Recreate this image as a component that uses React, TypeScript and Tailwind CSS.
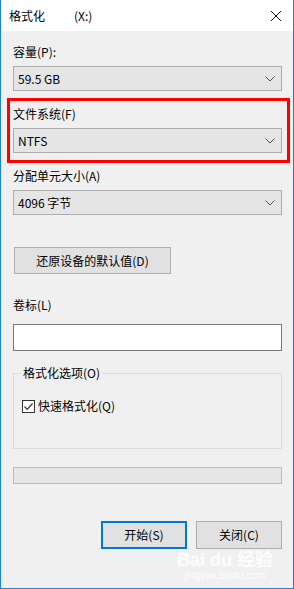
import React from "react";

const font = { fontFamily: '"Noto Sans CJK SC", "Noto Sans", sans-serif' };

function Chevron() {
  return (
    <svg width="10" height="6" viewBox="0 0 10 6" className="shrink-0">
      <path d="M0.5 0.5 L5 5 L9.5 0.5" fill="none" stroke="#555" strokeWidth="1" />
    </svg>
  );
}

function Select({ value }: { value: string }) {
  return (
    <div className="flex h-[25px] w-[269px] items-center justify-between border border-[#adadad] bg-[#e5e5e5] pl-[4px] pr-[6px] text-[12px] text-black">
      <span>{value}</span>
      <Chevron />
    </div>
  );
}

function Label({ text, className = "" }: { text: string; className?: string }) {
  return <div className={`h-[16px] text-[12px] leading-[16px] text-black ${className}`}>{text}</div>;
}

export default function App() {
  return (
    <div style={font} className="flex h-[589px] w-[294px] flex-col border-x border-b border-[#1c83dc] bg-[#f0f0f0]">
      {/* title bar */}
      <div className="flex h-[31px] items-center bg-white pl-[8px] pr-[6px] text-[12px] text-black">
        <span>格式化</span>
        <span className="ml-[29px]">(X:)</span>
        <svg width="12" height="12" viewBox="0 0 12 12" className="ml-auto mr-[5px]">
          <path d="M1 1 L11 11 M11 1 L1 11" stroke="#111" strokeWidth="1" />
        </svg>
      </div>

      <div className="flex flex-1 flex-col pl-[12px]">
        <Label text="容量(P):" className="mt-[13px]" />
        <div className="mt-[6px]">
          <Select value="59.5 GB" />
        </div>

        <div className="relative">
          <div className="pointer-events-none absolute left-[-6px] top-[7px] h-[65px] w-[283px] border-[3px] border-[#ff0000]" />
          <Label text="文件系统(F)" className="mt-[15px]" />
          <div className="mt-[6px]">
            <Select value="NTFS" />
          </div>
        </div>

        <Label text="分配单元大小(A)" className="mt-[15px]" />
        <div className="mt-[6px]">
          <Select value="4096 字节" />
        </div>

        <div className="ml-[1px] mt-[32px] flex h-[27px] w-[157px] items-center justify-center border border-[#adadad] bg-[#e1e1e1] text-[12px] text-black">
          还原设备的默认值(D)
        </div>

        <Label text="卷标(L)" className="mt-[23px]" />
        <div className="mt-[11px] h-[27px] w-[269px] border border-[#7a7a7a] bg-white" />

        <div className="relative mt-[22px] h-[76px] w-[269px] border border-[#dcdcdc]">
          <div className="absolute left-[7px] top-[-9px] bg-[#f0f0f0] px-[2px] text-[12px] leading-[16px] text-black">
            格式化选项(O)
          </div>
          <div className="ml-[8px] mt-[23px] flex items-center text-[12px] text-black">
            <div className="flex h-[13px] w-[13px] items-center justify-center border border-[#333] bg-white">
              <svg width="11" height="11" viewBox="0 0 11 11">
                <path d="M1.5 5.5 L4.2 8.3 L9.5 2.5" fill="none" stroke="#333" strokeWidth="1.2" />
              </svg>
            </div>
            <span className="ml-[3px]">快速格式化(Q)</span>
          </div>
        </div>

        <div className="mt-[18px] h-[17px] w-[269px] border border-[#bcbcbc] bg-[#e6e6e6]" />

        <div className="relative mt-[37px] flex w-[269px] justify-end gap-[9px]">
          <div className="flex h-[28px] w-[86px] items-center justify-center border-2 border-[#0078d7] bg-[#e1e1e1] text-[12px] text-black">
            开始(S)
          </div>
          <div className="flex h-[28px] w-[86px] items-center justify-center border border-[#adadad] bg-[#e1e1e1] text-[12px] text-black">
            关闭(C)
          </div>
          <div
            style={{ fontFamily: '"Liberation Sans", "Noto Sans CJK SC", sans-serif' }}
            className="pointer-events-none absolute left-[164px] top-[29px] flex flex-col items-center whitespace-nowrap text-white/80"
          >
            <span className="text-[18px] font-bold leading-[20px]">Bai du 经验</span>
            <span className="text-[10px] leading-[12px]">jingyan.baidu.com</span>
          </div>
        </div>
      </div>
    </div>
  );
}
